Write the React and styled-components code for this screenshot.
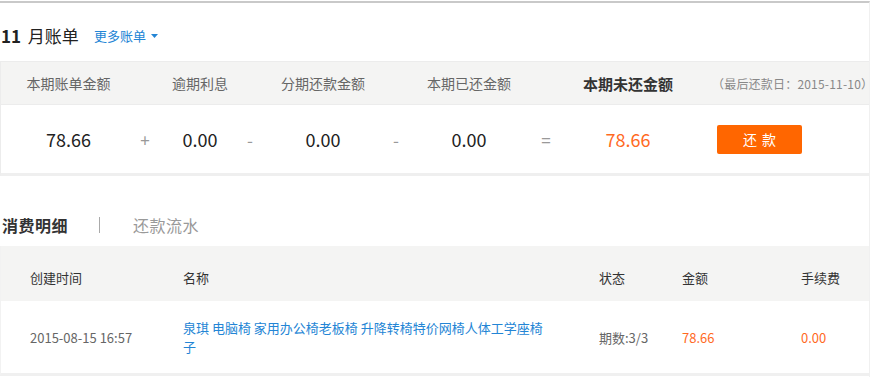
import React from "react";
import styled, { createGlobalStyle } from "styled-components";

const Global = createGlobalStyle`
  html, body { margin: 0; padding: 0; background: #fff; }
  body { font-family: "Noto Sans CJK SC", "Noto Sans", sans-serif; color: #333; }
  * { box-sizing: border-box; }
`;

const Page = styled.div`
  width: 870px;
  margin-top: 1px;
  border-top: 2px solid #c9c9c9;
  border-right: 1px solid #f0f0f0;
  min-height: 376px;
`;

const TitleBar = styled.div`
  height: 58px;
  padding: 7px 0 0 1px;
  display: flex;
  align-items: center;
`;

const Title = styled.h2`
  margin: 0;
  font-size: 17px;
  font-weight: 400;
  color: #222;
  line-height: 20px;
  b { font-weight: 700; margin-right: 3px; }
`;

const MoreLink = styled.a`
  margin-left: 15px;
  font-size: 13px;
  color: #2385d5;
  text-decoration: none;
  display: inline-flex;
  align-items: center;
  gap: 5px;
  cursor: pointer;
`;

const Summary = styled.section`
  border: 1px solid #ececec;
  border-bottom: 3px solid #efefef;
  border-right: none;
`;

const SumGrid = styled.div`
  display: grid;
  grid-template-columns: 135px 18px 92px 8px 138px 8px 138px 16px 148px 1fr;
  align-items: center;
  height: ${(p) => p.$h}px;
  background: ${(p) => p.$bg || "#fff"};
  border-bottom: ${(p) => (p.$line ? "1px solid #ececec" : "none")};
`;

const HeadCell = styled.div`
  text-align: ${(p) => (p.$left ? "left" : "center")};
  padding-left: ${(p) => (p.$left ? "10px" : "0")};
  font-size: ${(p) => (p.$strong ? "15px" : "14px")};
  font-weight: ${(p) => (p.$strong ? 700 : 400)};
  color: ${(p) => (p.$strong ? "#333" : "#666")};
  white-space: nowrap;
`;

const DateNote = styled.span`
  font-size: 12px;
  color: #888;
  letter-spacing: 0.2px;
`;

const ValueCell = styled.div`
  text-align: center;
  font-size: 18px;
  color: ${(p) => (p.$accent ? "#ff6a1f" : "#222")};
`;

const Op = styled.div`
  text-align: center;
  font-size: 17px;
  color: #999;
`;

const PayButton = styled.button`
  margin-left: 15px;
  width: 85px;
  height: 29px;
  border: none;
  border-radius: 2px;
  background: #ff6600;
  color: #fff;
  font-family: inherit;
  font-size: 14px;
  word-spacing: 2px;
  cursor: pointer;
  white-space: pre;
`;

const Tabs = styled.div`
  height: 70px;
  padding: 28px 0 0 2px;
  display: flex;
  align-items: center;
`;

const Tab = styled.span`
  font-size: 16px;
  font-weight: ${(p) => (p.$active ? 700 : 400)};
  color: ${(p) => (p.$active ? "#333" : "#999")};
  letter-spacing: 0.5px;
`;

const TabDivider = styled.span`
  width: 1px;
  height: 16px;
  background: #aaa;
  margin: 0 33px 0 31px;
`;

const Table = styled.section`
  border-left: 1px solid #f2f2f2;
  border-bottom: 3px solid #f0f0f0;
`;

const TRow = styled.div`
  display: grid;
  grid-template-columns: 182px 416px 83px 119px 1fr;
  align-items: ${(p) => (p.$head ? "start" : "center")};
  height: ${(p) => p.$h}px;
  padding-top: ${(p) => (p.$head ? "22px" : "0")};
  background: ${(p) => (p.$head ? "#f4f4f3" : "#fff")};
  font-size: 13px;
  line-height: ${(p) => (p.$head ? "20px" : "19px")};
`;

const TCell = styled.div`
  padding-left: ${(p) => p.$pl || 0}px;
  color: ${(p) => (p.$tone === "orange" ? "#ff6a1f" : p.$tone === "head" ? "#333" : "#666")};
`;

const ItemLink = styled.a`
  display: block;
  max-width: 366px;
  color: #2385d5;
  text-decoration: none;
`;

const Caret = () => (
  <svg width="7" height="4" viewBox="0 0 7 4" aria-hidden="true">
    <path d="M0 0h7L3.5 4z" fill="#2385d5" />
  </svg>
);

export default function App() {
  return (
    <>
      <Global />
      <Page>
        <TitleBar>
          <Title>
            <b>11</b> 月账单
          </Title>
          <MoreLink>
            更多账单 <Caret />
          </MoreLink>
        </TitleBar>

        <Summary>
          <SumGrid $h={43} $bg="#f4f4f3" $line>
            <HeadCell>本期账单金额</HeadCell>
            <span />
            <HeadCell>逾期利息</HeadCell>
            <span />
            <HeadCell>分期还款金额</HeadCell>
            <span />
            <HeadCell>本期已还金额</HeadCell>
            <span />
            <HeadCell $strong>本期未还金额</HeadCell>
            <HeadCell $left>
              <DateNote>（最后还款日：2015-11-10）</DateNote>
            </HeadCell>
          </SumGrid>
          <SumGrid $h={68}>
            <ValueCell>78.66</ValueCell>
            <Op>+</Op>
            <ValueCell>0.00</ValueCell>
            <Op>-</Op>
            <ValueCell>0.00</ValueCell>
            <Op>-</Op>
            <ValueCell>0.00</ValueCell>
            <Op>=</Op>
            <ValueCell $accent>78.66</ValueCell>
            <div>
              <PayButton>还 款</PayButton>
            </div>
          </SumGrid>
        </Summary>

        <Tabs>
          <Tab $active>消费明细</Tab>
          <TabDivider />
          <Tab>还款流水</Tab>
        </Tabs>

        <Table>
          <TRow $head $h={55}>
            <TCell $pl={29} $tone="head">创建时间</TCell>
            <TCell $tone="head">名称</TCell>
            <TCell $tone="head">状态</TCell>
            <TCell $tone="head">金额</TCell>
            <TCell $tone="head">手续费</TCell>
          </TRow>
          <TRow $h={72}>
            <TCell $pl={29}>2015-08-15 16:57</TCell>
            <TCell>
              <ItemLink>泉琪 电脑椅 家用办公椅老板椅 升降转椅特价网椅人体工学座椅子</ItemLink>
            </TCell>
            <TCell>期数:3/3</TCell>
            <TCell $tone="orange">78.66</TCell>
            <TCell $tone="orange">0.00</TCell>
          </TRow>
        </Table>
      </Page>
    </>
  );
}
